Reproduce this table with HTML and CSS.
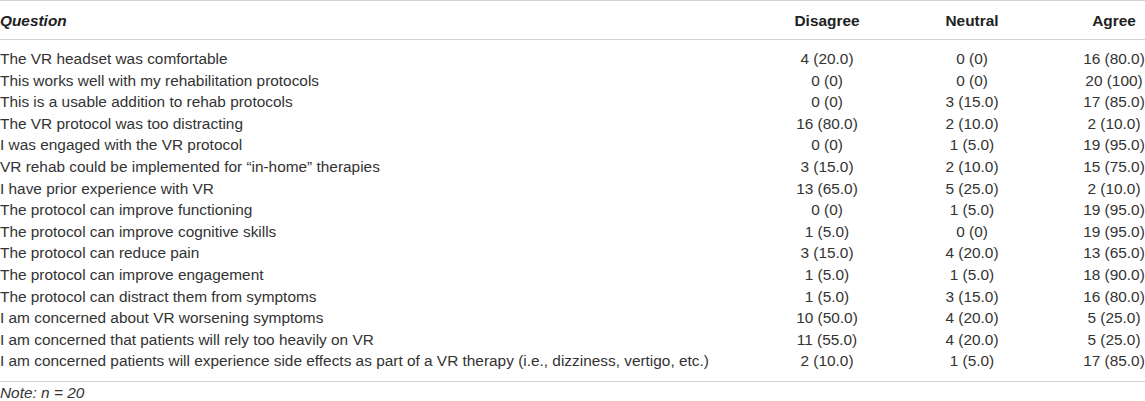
FILE: index.html
```html
<!DOCTYPE html>
<html lang="en">
<head>
<meta charset="utf-8">
<title>Survey results</title>
<link rel="stylesheet" href="styles.css">
</head>
<body>
<div class="wrap">
<table class="results">
  <colgroup>
    <col class="c-q">
    <col class="c-dis">
    <col class="c-neu">
    <col class="c-agr">
  </colgroup>
  <thead>
    <tr>
      <th class="q">Question</th>
      <th class="n">Disagree</th>
      <th class="n">Neutral</th>
      <th class="n agr">Agree</th>
    </tr>
  </thead>
  <tbody>
    <tr class="first"><td>The VR headset was comfortable</td><td class="n">4 (20.0)</td><td class="n">0 (0)</td><td class="n agr">16 (80.0)</td></tr>
    <tr><td>This works well with my rehabilitation protocols</td><td class="n">0 (0)</td><td class="n">0 (0)</td><td class="n agr">20 (100)</td></tr>
    <tr><td>This is a usable addition to rehab protocols</td><td class="n">0 (0)</td><td class="n">3 (15.0)</td><td class="n agr">17 (85.0)</td></tr>
    <tr><td>The VR protocol was too distracting</td><td class="n">16 (80.0)</td><td class="n">2 (10.0)</td><td class="n agr">2 (10.0)</td></tr>
    <tr><td>I was engaged with the VR protocol</td><td class="n">0 (0)</td><td class="n">1 (5.0)</td><td class="n agr">19 (95.0)</td></tr>
    <tr><td>VR rehab could be implemented for “in-home” therapies</td><td class="n">3 (15.0)</td><td class="n">2 (10.0)</td><td class="n agr">15 (75.0)</td></tr>
    <tr><td>I have prior experience with VR</td><td class="n">13 (65.0)</td><td class="n">5 (25.0)</td><td class="n agr">2 (10.0)</td></tr>
    <tr><td>The protocol can improve functioning</td><td class="n">0 (0)</td><td class="n">1 (5.0)</td><td class="n agr">19 (95.0)</td></tr>
    <tr><td>The protocol can improve cognitive skills</td><td class="n">1 (5.0)</td><td class="n">0 (0)</td><td class="n agr">19 (95.0)</td></tr>
    <tr><td>The protocol can reduce pain</td><td class="n">3 (15.0)</td><td class="n">4 (20.0)</td><td class="n agr">13 (65.0)</td></tr>
    <tr><td>The protocol can improve engagement</td><td class="n">1 (5.0)</td><td class="n">1 (5.0)</td><td class="n agr">18 (90.0)</td></tr>
    <tr><td>The protocol can distract them from symptoms</td><td class="n">1 (5.0)</td><td class="n">3 (15.0)</td><td class="n agr">16 (80.0)</td></tr>
    <tr><td>I am concerned about VR worsening symptoms</td><td class="n">10 (50.0)</td><td class="n">4 (20.0)</td><td class="n agr">5 (25.0)</td></tr>
    <tr><td>I am concerned that patients will rely too heavily on VR</td><td class="n">11 (55.0)</td><td class="n">4 (20.0)</td><td class="n agr">5 (25.0)</td></tr>
    <tr class="last"><td>I am concerned patients will experience side effects as part of a VR therapy (i.e., dizziness, vertigo, etc.)</td><td class="n">2 (10.0)</td><td class="n">1 (5.0)</td><td class="n agr">17 (85.0)</td></tr>
  </tbody>
</table>
<p class="note">Note: n = 20</p>
</div>
</body>
</html>
```
FILE: styles.css
```css
html, body {
  margin: 0;
  padding: 0;
  background: #ffffff;
}

body {
  font-family: "Liberation Sans", Arial, Helvetica, sans-serif;
  font-size: 15.4px;
  color: #333333;
}

.wrap {
  width: 1145px;
}

.results {
  width: 100%;
  border-collapse: collapse;
  table-layout: fixed;
  border-top: 1px solid #d2d2d2;
  border-bottom: 1px solid #d2d2d2;
}

.c-dis { width: 90px; }
.c-neu { width: 200px; }
.c-agr { width: 73px; }

.results th,
.results td {
  padding: 0;
  white-space: nowrap;
}

.results th {
  font-weight: bold;
  line-height: 18px;
  padding-top: 11px;
  padding-bottom: 9px;
  border-bottom: 1px solid #d2d2d2;
  color: #222222;
}

.results th.q {
  text-align: left;
  font-style: italic;
}

.results td {
  line-height: 21.6px;
}

.results .n {
  text-align: center;
}

.results .agr {
  padding-left: 11px;
}

.results tr.first td {
  padding-top: 8px;
}

.results tr.last td {
  padding-bottom: 9px;
}

.note {
  margin: 2px 0 0 0;
  font-style: italic;
  line-height: 18px;
}
```
